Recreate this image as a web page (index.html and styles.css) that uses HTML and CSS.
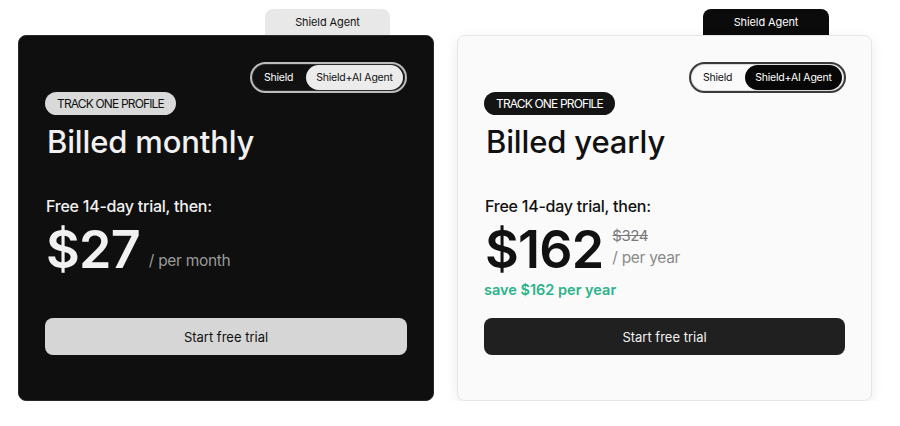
FILE: index.html
```html
<!DOCTYPE html>
<html>
<head>
<meta charset="utf-8">
<link rel="stylesheet" href="styles.css">
</head>
<body>
<div class="row">
  <div class="plan plan-dark">
    <div class="tab">Shield Agent</div>
    <div class="card">
      <div class="toggle">
        <span class="seg">Shield</span>
        <span class="seg seg-on">Shield+AI Agent</span>
      </div>
      <span class="badge">TRACK ONE PROFILE</span>
      <h2 class="title">Billed monthly</h2>
      <p class="trial">Free 14-day trial, then:</p>
      <div class="price-row">
        <span class="price">$27</span>
        <span class="per per-inline">/ per month</span>
      </div>
      <button class="cta">Start free trial</button>
    </div>
  </div>
  <div class="plan plan-light">
    <div class="tab">Shield Agent</div>
    <div class="card">
      <div class="toggle">
        <span class="seg">Shield</span>
        <span class="seg seg-on">Shield+AI Agent</span>
      </div>
      <span class="badge">TRACK ONE PROFILE</span>
      <h2 class="title">Billed yearly</h2>
      <p class="trial">Free 14-day trial, then:</p>
      <div class="price-row">
        <span class="price">$162</span>
        <div class="price-side">
          <span class="old">$324</span>
          <span class="per">/ per year</span>
        </div>
      </div>
      <p class="save">save $162 per year</p>
      <button class="cta">Start free trial</button>
    </div>
  </div>
</div>
</body>
</html>
```
FILE: styles.css
```css
* { box-sizing: border-box; }
body {
  margin: 0;
  background: #ffffff;
  font-family: "Inter", "Liberation Sans", sans-serif;
  letter-spacing: -0.03em;
}
.row {
  display: flex;
  gap: 23px;
  padding: 9px 0 0 18px;
}
.plan {
  display: flex;
  flex-direction: column;
  width: 416px;
}
.plan-light { width: 415px; }
.tab {
  align-self: flex-start;
  margin-left: 247px;
  width: 125px;
  height: 26px;
  border-radius: 8px 8px 0 0;
  font-size: 11px;
  display: flex;
  align-items: center;
  justify-content: center;
  letter-spacing: -0.01em;
}
.plan-light .tab { margin-left: 246px; width: 126px; }
.plan-dark .tab { background: #e8e8e8; color: #111; }
.plan-light .tab { background: #0b0b0b; color: #fff; }
.card {
  height: 366px;
  border-radius: 8px;
  padding: 26px 26px 45px 26px;
  display: flex;
  flex-direction: column;
  align-items: flex-start;
}
.plan-dark .card {
  background: #0f0f0f;
  border: 1px solid #2a2a2a;
  color: #f1f1f1;
}
.plan-light .card {
  background: #fafafa;
  border: 1px solid #e6e6e6;
  box-shadow: 0 4px 14px rgba(0,0,0,0.08);
  color: #111;
}
.toggle {
  align-self: flex-end;
  width: 157px;
  height: 31px;
  border-radius: 16px;
  padding: 2px 2px 2px 12px;
  display: flex;
  align-items: center;
  justify-content: space-between;
  font-size: 10.5px;
  letter-spacing: -0.02em;
}
.plan-dark .toggle {
  border: 2px solid #bdbdbd;
  box-shadow: inset 0 0 0 1px #2c2c2c;
  background: #111;
  color: #fff;
}
.plan-light .toggle {
  border: 2px solid #3a3a3a;
  box-shadow: inset 0 0 0 1px #dcdcdc;
  background: #fafafa;
  color: #111;
  margin-right: -1px;
}
.seg-on {
  height: 25px;
  width: 97px;
  border-radius: 13px;
  display: flex;
  align-items: center;
  justify-content: center;
}
.plan-dark .seg-on { background: #ececec; color: #111; }
.plan-light .seg-on { background: #070707; color: #fff; }
.badge {
  margin-top: -1px;
  height: 23px;
  padding: 0 12px;
  border-radius: 12px;
  display: flex;
  align-items: center;
  font-size: 12px;
  letter-spacing: -0.07em;
}
.plan-dark .badge { background: #d9d9d9; color: #111; }
.plan-light .badge { background: #141414; color: #fff; }
.title {
  margin: 7px 0 0 2px;
  font-size: 31px;
  font-weight: 500;
  line-height: 40px;
  letter-spacing: -0.005em;
}
.trial {
  margin: 34px 0 0 1px;
  font-size: 16px;
  line-height: 20px;
  font-weight: 500;
  letter-spacing: -0.015em;
}
.price-row {
  margin-top: 2px;
  display: flex;
  align-items: flex-end;
  gap: 9px;
}
.price {
  font-size: 52px;
  font-weight: 600;
  line-height: 63px;
  letter-spacing: -0.015em;
  margin-left: 1px;
}
.per {
  font-size: 15.5px;
  color: #8a8a8a;
  letter-spacing: -0.02em;
  line-height: 20px;
}
.per-inline { margin-bottom: 10px; }
.plan-dark .per { color: #9a9a9a; }
.price-side {
  display: flex;
  flex-direction: column;
  margin-bottom: 13px;
}
.old {
  font-size: 15px;
  color: #7a7a7a;
  text-decoration: line-through;
  line-height: 20px;
  margin-bottom: 2px;
}
.save {
  margin: 0;
  font-size: 14.5px;
  font-weight: 600;
  color: #2bb38a;
  line-height: 18px;
  letter-spacing: 0;
}
.cta {
  margin-top: auto;
  width: 100%;
  height: 37px;
  border: none;
  border-radius: 8px;
  font-family: inherit;
  font-size: 13px;
  letter-spacing: 0;
}
.plan-dark .cta { background: #d6d6d6; color: #111; }
.plan-light .cta { background: #202020; color: #f1f1f1; }
```
